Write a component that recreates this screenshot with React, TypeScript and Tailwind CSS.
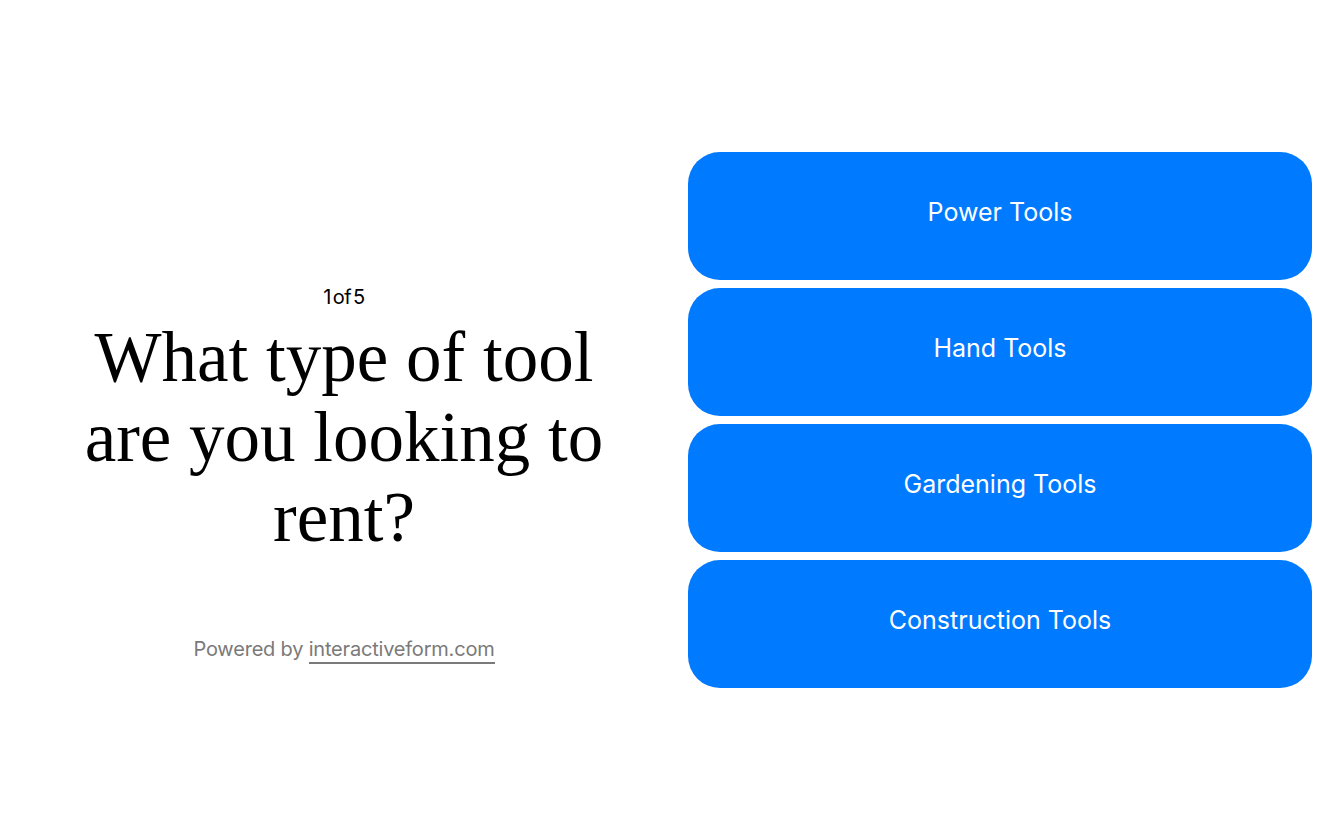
export default function App() {
  const options = ["Power Tools", "Hand Tools", "Gardening Tools", "Construction Tools"];
  return (
    <div className="w-[1344px] h-[840px] bg-white flex items-center px-8 gap-8">
      <div className="w-[624px] self-start mt-[285px] flex flex-col items-center text-center">
        <div
          className="text-[20px] leading-[24px] text-black tracking-[-0.02em] [word-spacing:-0.18em]"
          style={{ fontFamily: "Inter, 'Noto Sans', sans-serif" }}
        >
          1 of 5
        </div>
        <h1
          className="mt-[8px] text-[71px] leading-[80px] text-black w-[540px]"
          style={{ fontFamily: "'Liberation Serif', serif" }}
        >
          What type of tool are you looking to rent?
        </h1>
        <div
          className="mt-[80px] text-[20px] leading-[24px] text-[#7a7a7a] tracking-[-0.01em]"
          style={{ fontFamily: "Inter, 'Noto Sans', sans-serif" }}
        >
          Powered by{" "}
          <span className="border-b-2 border-[#7a7a7a] pb-[1px]">interactiveform.com</span>
        </div>
      </div>
      <div className="w-[624px] flex flex-col gap-2">
        {options.map((o) => (
          <button
            key={o}
            className="h-[128px] w-full rounded-[32px] bg-[#007aff] text-white text-[25px] flex items-center justify-center pb-[6px]"
            style={{ fontFamily: "Inter, 'Noto Sans', sans-serif" }}
          >
            {o}
          </button>
        ))}
      </div>
    </div>
  );
}
